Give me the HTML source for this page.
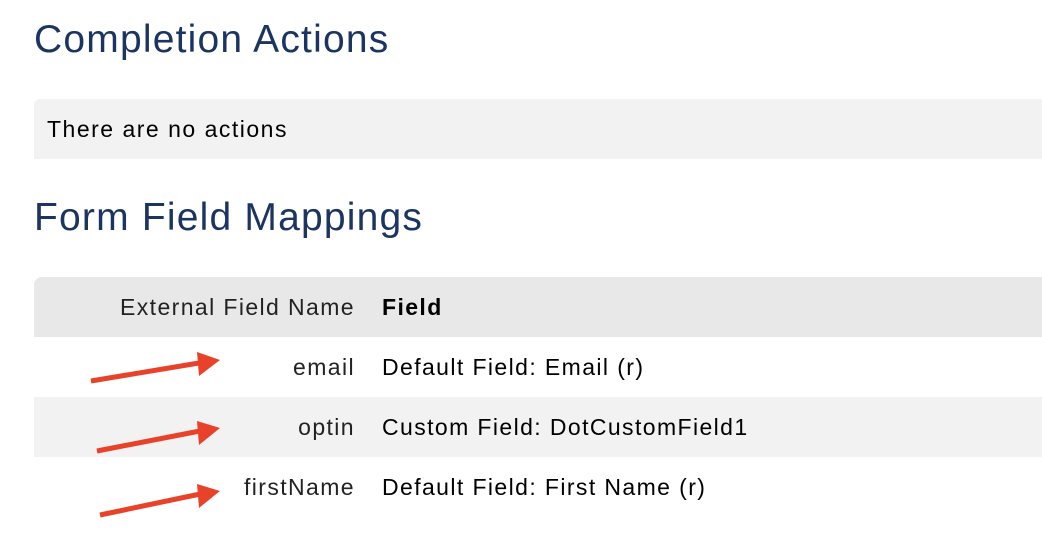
<!DOCTYPE html>
<html><head><meta charset="utf-8"><style>
body{margin:0;width:1042px;height:550px;background:#fff;font-family:"Liberation Sans",sans-serif;position:relative;overflow:hidden}
.h{position:absolute;left:34px;color:#1c3461;font-size:39px;letter-spacing:1.2px;white-space:nowrap}
.box{position:absolute;left:34px;right:0;top:99px;height:60px;background:#f2f2f2;border-radius:6px 0 0 0;font-size:23px;letter-spacing:1.5px;color:#000;line-height:60px;padding-left:13px}
.row{position:absolute;left:34px;right:0;height:60px;line-height:60px;font-size:23px;letter-spacing:1.4px;color:#000}
.row .a{position:absolute;right:687px;color:#222;white-space:nowrap}
.row .b{position:absolute;left:348px;white-space:nowrap}
</style></head><body>
<div class="h" style="top:18px">Completion Actions</div>
<div class="box">There are no actions</div>
<div class="h" style="top:196px">Form Field Mappings</div>
<div class="row" style="top:277px;background:#e8e8e8;border-radius:8px 0 0 0"><span class="a">External Field Name</span><span class="b" style="font-weight:bold">Field</span></div>
<div class="row" style="top:337px"><span class="a">email</span><span class="b">Default Field: Email (r)</span></div>
<div class="row" style="top:397px;background:#f2f2f2"><span class="a">optin</span><span class="b">Custom Field: DotCustomField1</span></div>
<div class="row" style="top:457px"><span class="a">firstName</span><span class="b">Default Field: First Name (r)</span></div>
<svg width="1042" height="550" style="position:absolute;left:0;top:0">
<g stroke="#e8432a" stroke-width="5" fill="#e8432a">
<line x1="91" y1="381" x2="205" y2="362"/><polygon stroke="none" points="197,352 220,360 199,376"/>
<line x1="97" y1="451" x2="205" y2="430"/><polygon stroke="none" points="197,421 220,428 199,445"/>
<line x1="100" y1="515" x2="205" y2="493"/><polygon stroke="none" points="197,484 220,491 199,508"/>
</g></svg>
</body></html>
